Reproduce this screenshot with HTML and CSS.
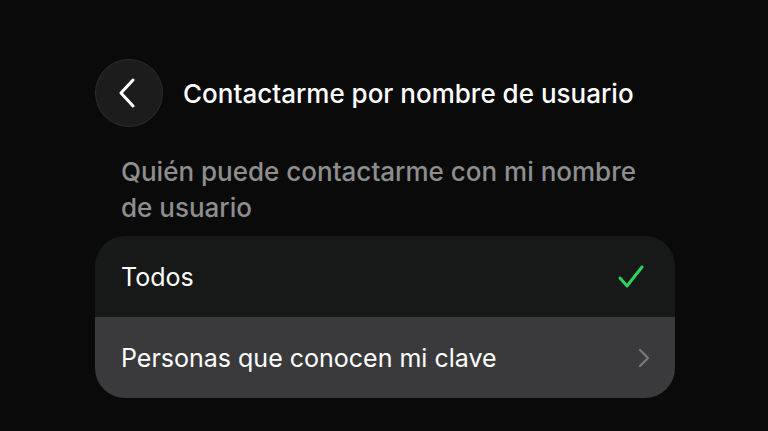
FILE: index.html
```html
<!DOCTYPE html>
<html lang="es">
<head>
    <meta charset="UTF-8">
    <title>Contactarme por nombre de usuario</title>
    <link rel="stylesheet" href="styles.css">
</head>
<body>
    <div class="screen">
        <div class="header">
            <button class="back-btn" aria-label="Atrás">
                <svg width="20" height="30" viewBox="0 0 20 30">
                    <path d="M16 2 L4 15 L16 28" fill="none" stroke="#fff" stroke-width="3" stroke-linecap="round" stroke-linejoin="round"/>
                </svg>
            </button>
            <h1 class="title">Contactarme por nombre de usuario</h1>
        </div>

        <p class="section-label">Quién puede contactarme con mi nombre de usuario</p>

        <div class="options">
            <div class="option selected">
                <span>Todos</span>
                <svg width="28" height="26" viewBox="0 0 28 26">
                    <path d="M3 14 L10 22 L25 3" fill="none" stroke="#30d158" stroke-width="3" stroke-linecap="round" stroke-linejoin="round"/>
                </svg>
            </div>
            <div class="option">
                <span>Personas que conocen mi clave</span>
                <svg class="chevron" width="14" height="20" viewBox="0 0 14 20">
                    <path d="M3 2 L11 10 L3 18" fill="none" stroke="#77777a" stroke-width="2.4" stroke-linecap="round" stroke-linejoin="round"/>
                </svg>
            </div>
        </div>
    </div>
</body>
</html>
```

FILE: styles.css
```css
html, body {
    margin: 0;
    padding: 0;
    background: #0a0a0a;
    font-family: Inter, "Noto Sans", sans-serif;
    color: #fff;
}
.screen {
    width: 580px;
    padding: 59px 0 0 95px;
}
.header {
    display: flex;
    align-items: center;
    gap: 20px;
}
.back-btn {
    width: 68px;
    height: 68px;
    border-radius: 50%;
    background: #1c1c1d;
    border: 1px solid #2c2c2e;
    display: flex;
    align-items: center;
    justify-content: center;
    padding: 0 4px 0 0;
    box-sizing: border-box;
}
.title {
    margin: 0;
    font-size: 26px;
    font-weight: 500;
}
.section-label {
    margin: 27px 0 0 26px;
    font-size: 26px;
    line-height: 36px;
    color: #8e8e90;
    font-weight: 500;
    width: 530px;
}
.options {
    margin-top: 10px;
    border-radius: 30px;
    overflow: hidden;
}
.option {
    height: 81px;
    display: flex;
    align-items: center;
    justify-content: space-between;
    padding: 0 24px 0 26px;
    font-size: 25px;
    background: #3a3a3c;
}
.option.selected {
    background: #171818;
    padding-right: 30px;
}
```
